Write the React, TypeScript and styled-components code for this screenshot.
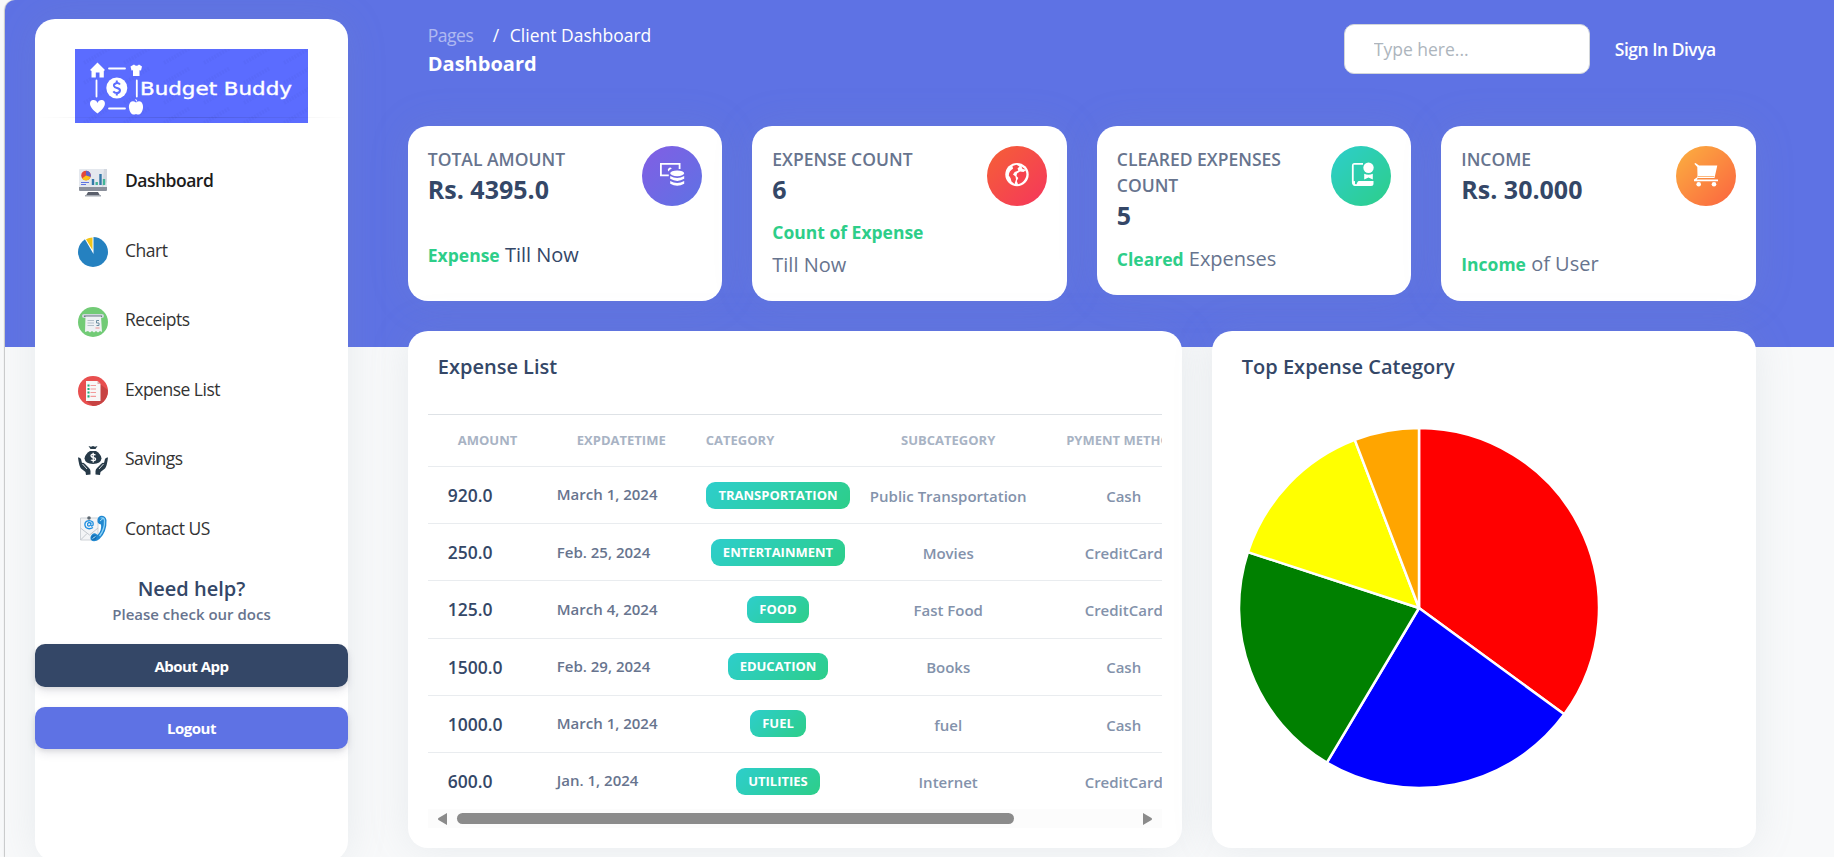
import React from "react";
import styled, { createGlobalStyle, css } from "styled-components";

const navy = "#344767";
const slate = "#67748e";
const primary = "#5e72e4";
const success = "#2dce89";

const GlobalStyle = createGlobalStyle`
  *, *::before, *::after { box-sizing: border-box; }
  html, body { margin: 0; height: 100%; overflow: hidden; }
  body {
    font-family: "Open Sans", "Noto Sans", sans-serif;
    font-size: 20px;
    line-height: 1.5;
    color: ${slate};
    background: #f8f9fa;
  }
  p, h5, h6, ul { margin: 0; padding: 0; }
`;

const Page = styled.div`
  width: 100%;
  height: 857px;
  padding-left: 5px;
  overflow: hidden;
`;

const Canvas = styled.div`
  height: 100%;
  display: flex;
  align-items: flex-start;
  border-top-left-radius: 10px;
  background: linear-gradient(${primary}, ${primary}) top / 100% 347px no-repeat #f8f9fa;
  box-shadow: -1px 0 1px rgba(0, 0, 0, 0.2);
`;

const panel = css`
  background: #fff;
  border-radius: 20px;
  box-shadow: 0 0 40px rgba(136, 152, 170, 0.15);
`;

const Sidebar = styled.aside`
  ${panel}
  flex: none;
  width: 313px;
  height: 842px;
  margin: 19px 0 0 30px;
  padding-top: 30px;
`;

const LogoBox = styled.div`
  position: relative;
  height: 74px;
  padding: 0 40px;
  svg { display: block; }
  &::after {
    content: "";
    position: absolute;
    left: 0;
    right: 0;
    top: 68px;
    height: 1px;
    background: linear-gradient(90deg, transparent, rgba(0, 0, 0, 0.12), transparent);
  }
`;

const NavList = styled.ul`
  list-style: none;
  margin-top: 23px;
`;

const NavItem = styled.li`
  display: flex;
  align-items: center;
  height: 69.5px;
  padding-left: 43px;
  gap: 17px;
  svg { display: block; flex: none; margin-top: 4px; }
`;

const NavLabel = styled.span<{ $active?: boolean }>`
  padding-bottom: ${(p) => (p.$active ? 2 : 1)}px;
  font-size: 17.5px;
  letter-spacing: -0.5px;
  color: ${(p) => (p.$active ? "#1c1c1c" : "#333")};
  font-weight: ${(p) => (p.$active ? 600 : 400)};
`;

const Help = styled.div`
  margin-top: 12px;
  text-align: center;
`;

const HelpTitle = styled.h6`
  font-size: 20px;
  line-height: 28px;
  font-weight: 600;
  color: ${navy};
`;

const HelpText = styled.p`
  font-size: 15px;
  line-height: 22px;
  font-weight: 600;
`;

const SideButton = styled.button<{ $color: string; $h: number }>`
  display: block;
  width: 100%;
  height: ${(p) => p.$h}px;
  margin: 0 0 20px;
  padding: 0;
  border: 0;
  border-radius: 10px;
  background: ${(p) => p.$color};
  color: #fff;
  font: 700 15px "Open Sans", sans-serif;
  letter-spacing: -0.5px;
  box-shadow: 0 5px 8px rgba(50, 50, 93, 0.1), 0 2px 4px rgba(0, 0, 0, 0.08);
`;

const Buttons = styled.div`
  margin-top: 19px;
`;

const Main = styled.main`
  flex: none;
  width: 1348px;
  margin-left: 59.8px;
`;

const Header = styled.header`
  display: flex;
  align-items: flex-start;
  height: 126px;
  padding-left: 20px;
  color: #fff;
`;

const Crumbs = styled.div`
  flex: 1;
  padding-top: 22px;
`;

const CrumbLine = styled.div`
  display: flex;
  font-size: 17.5px;
  line-height: 26px;
`;

const CrumbParent = styled.span`
  width: 65px;
  letter-spacing: -0.5px;
  opacity: 0.5;
`;

const CrumbSlash = styled.span`
  width: 17px;
`;

const PageTitle = styled.h6`
  font-size: 20px;
  line-height: 32px;
  font-weight: 700;
`;

const Search = styled.input`
  width: 246px;
  height: 50px;
  margin-top: 24px;
  padding: 0 29px;
  border: 1px solid #d2d6da;
  border-radius: 10px;
  background: #fff;
  font: 400 17.5px "Open Sans", sans-serif;
  outline: 0;
  &::placeholder { color: #adb5bd; opacity: 1; }
`;

const SignIn = styled.a`
  width: 141px;
  margin: 36px 0 0 25px;
  font-size: 17.5px;
  line-height: 26px;
  font-weight: 600;
  letter-spacing: -0.5px;
`;

const Stats = styled.section`
  display: grid;
  grid-template-columns: repeat(4, 1fr);
  gap: 30px;
  align-items: start;
`;

const StatCard = styled.article<{ $h: number }>`
  ${panel}
  display: flex;
  flex-direction: column;
  height: ${(p) => p.$h}px;
  padding: 20px;
`;

const StatTop = styled.div`
  display: flex;
  justify-content: space-between;
  height: 60px;
`;

const StatLabel = styled.p`
  max-width: 200px;
  font-size: 17.5px;
  line-height: 26px;
  font-weight: 600;
  text-transform: uppercase;
`;

const StatValue = styled.h5`
  font-size: 25px;
  line-height: 34px;
  font-weight: 700;
  color: ${navy};
`;

const StatNote = styled.p<{ $top: number; $dark?: boolean }>`
  margin-top: ${(p) => p.$top}px;
  max-width: 205px;
  line-height: 32.5px;
  font-size: 20px;
  color: ${(p) => (p.$dark ? navy : slate)};
  b {
    font-size: 17.5px;
    font-weight: 700;
    color: ${success};
  }
  span { white-space: nowrap; }
`;

const Disc = styled.div<{ $from: string; $to: string }>`
  flex: none;
  width: 60px;
  height: 60px;
  border-radius: 50%;
  background: linear-gradient(135deg, ${(p) => p.$from}, ${(p) => p.$to});
  svg { display: block; }
`;

const Panels = styled.section`
  display: grid;
  grid-template-columns: 774px 544px;
  justify-content: space-between;
  margin-top: 30px;
`;

const Panel = styled.article`
  ${panel}
  height: 517px;
`;

const PanelTitle = styled.h6`
  padding: 21px 30px 0;
  font-size: 20px;
  line-height: 30px;
  font-weight: 600;
  color: ${navy};
`;

const TableWrap = styled.div`
  width: 734.4px;
  margin: 32px 0 0 20px;
  overflow: hidden;
`;

const Row = styled.div<{ $head?: boolean }>`
  display: grid;
  grid-template-columns: 119px 149px 164.4px 176px 175px;
  align-items: center;
  width: 783.4px;
  height: ${(p) => (p.$head ? 53 : 57.2)}px;
  border-bottom: 1px solid #e9ecef;
  ${(p) => p.$head && css`border-top: 1px solid #dee2e6;`}
  &:last-child { height: 56.2px; border-bottom: 0; }
`;

const HeadCell = styled.span<{ $left?: number }>`
  font-size: 13px;
  font-weight: 700;
  color: #a8b3c4;
  white-space: nowrap;
  ${(p) => (p.$left ? `padding-left: ${p.$left}px;` : "text-align: center;")}
`;

const Amount = styled.span`
  padding-left: 20px;
  font-size: 17.5px;
  font-weight: 600;
  color: ${navy};
`;

const DateCell = styled.span`
  padding: 0 0 1px 10px;
  font-size: 15px;
  font-weight: 600;
`;

const Centered = styled.span`
  padding-top: 2px;
  text-align: center;
  font-size: 15px;
  font-weight: 600;
  color: #8392ab;
  white-space: nowrap;
`;

const Badge = styled.span`
  justify-self: center;
  height: 27px;
  padding: 0 12px;
  border-radius: 9px;
  background: linear-gradient(135deg, #2dcecc, #2dce89);
  color: #fff;
  font-size: 13px;
  line-height: 27px;
  font-weight: 700;
  text-transform: uppercase;
`;

const ScrollBar = styled.div`
  display: flex;
  align-items: center;
  width: 734px;
  height: 19px;
  margin: 0 0 0 20px;
  padding: 0 10px;
  background: #fcfcfc;
`;

const Thumb = styled.div`
  width: 557px;
  height: 11px;
  margin: 0 auto 0 10px;
  border-radius: 6px;
  background: #8b8b8b;
`;

const PieWrap = styled.div`
  padding: 45px 0 0 26.6px;
  svg { display: block; }
`;

function Logo() {
  const marks = [];
  for (let r = 0; r < 4; r++)
    for (let c = 0; c < 6; c++) marks.push([9 + c * 40, 14 + r * 20]);
  return (
    <svg width="233" height="74" viewBox="0 0 233 74">
      <rect width="233" height="74" fill="#5b6cff" />
      <g stroke="#000" strokeOpacity=".025" strokeWidth="4" strokeDasharray="2 1">
        {marks.map(([x, y], i) => (
          <path key={i} d={`M${x} ${y}l26 -15`} />
        ))}
      </g>
      <g fill="#fff">
        <path d="M22.500 13.500L30 21L28.800 22V28.500H24.500V23.500H20.800V28.500H16.500V22L15 21Z" />
        <path d="M59 15.500Q61.500 18 64 15.500L67 17.500L66 21.500L64.500 21.200V27H58V21.200L56.500 21.500L55.500 17.500Z" />
        <circle cx="41.800" cy="39" r="10.500" />
        <path d="M22.500 64.500C12 57 14.500 51 18.500 51Q21.500 51 22.500 54Q23.500 51 26.500 51C30.500 51 33 57 22.500 64.500Z" />
        <path d="M61 53.500C56 50 53.500 55 54 59C55 65 58 66.500 61 65C64 66.500 67 65 68 59C68.500 55 66 50 61 53.500ZM60 50L61.500 53L62 51Z" />
      </g>
      <g stroke="#fff" strokeWidth="1.800" strokeLinecap="round">
        <path d="M34 19.500H50M34 59.500H50M21.500 31.500V47.500M61.800 31.500V47.500" />
      </g>
      <path
        d="M45 35.500Q43.500 33.500 41 34.200Q38.500 35 39 37Q39.500 38.500 42 39Q45 39.700 45 41.500Q44.600 44 41.800 44Q39.500 44 38.300 42.300M41.800 31.500V34M41.800 44V46.500"
        fill="none"
        stroke="#5b6cff"
        strokeWidth="2"
      />
      <text
        x="65"
        y="45.500"
        fill="#fff"
        stroke="#fff"
        strokeWidth=".400"
        fontFamily="DejaVu Sans, sans-serif"
        fontSize="18.500"
        textLength="152"
        lengthAdjust="spacingAndGlyphs"
      >
        Budget Buddy
      </text>
    </svg>
  );
}

const DashboardIcon = () => (
  <svg width="30" height="30" viewBox="0 0 30 30">
    <path d="M10 24H20L22 27.500H8Z" fill="#5a5f6b" />
    <rect x="7" y="27" width="16" height="1.500" fill="#a4a9b2" />
    <rect x="1" y="1" width="28" height="19" rx="1" fill="#e4e8ee" />
    <path d="M29 1V14L24 20L26 1Z" fill="#d3d8e0" />
    <path d="M1 19H29V22Q29 23 28 23H2Q1 23 1 22Z" fill="#8b909b" />
    <circle cx="8" cy="7.500" r="4.800" fill="#e2493b" />
    <path d="M8 7.500V2.700A4.800 4.800 0 0 1 12.600 9Z" fill="#5a63c9" />
    <path d="M8 7.500L12.600 9A4.800 4.800 0 0 1 4 10.500Z" fill="#fcc419" />
    <path d="M3 14.500H11M3 16.500H8" stroke="#5f74e0" />
    <path d="M15 17V11M22.500 17V6" stroke="#3578a8" strokeWidth="2.400" />
    <path d="M18.700 17V14M26 17V11" stroke="#41b496" strokeWidth="2.400" />
  </svg>
);

const ChartIcon = () => (
  <svg width="30" height="30" viewBox="0 0 30 30">
    <circle cx="15" cy="15" r="15" fill="#2581c0" />
    <path d="M15.500 17L6.500 1.500L9 0H15.500Z" fill="#fff" />
    <path d="M14.500 13V.5Q11 .5 8 2.300Z" fill="#f0c419" />
  </svg>
);

const ReceiptsIcon = () => (
  <svg width="30" height="30" viewBox="0 0 30 30">
    <circle cx="15" cy="15" r="15" fill="#72cb76" />
    <rect x="4" y="7" width="22" height="4" rx="2" fill="#cfd6dd" />
    <rect x="6" y="8.500" width="18" height="1.500" fill="#6d7b86" />
    <path d="M7.500 9.500H23L24 25L22 24L20 25.500L18 24L16 25.500L14 24L12 25.500L10 24L7 25Z" fill="#eef1f4" />
    <path d="M9.500 13.500H16M9.500 16H16M9.500 18.500H16" stroke="#b3bfca" />
    <path d="M21 13.500H18.500V16H21V18.500H18.500" stroke="#6c8da0" fill="none" />
    <path d="M17.500 21H21.500" stroke="#ef8f8f" />
  </svg>
);

const ExpenseIcon = () => (
  <svg width="30" height="30" viewBox="0 0 30 30">
    <circle cx="15" cy="15" r="15" fill="#e84f4f" />
    <path d="M22 8L29.800 14A15 15 0 0 1 15 30L8 25Z" fill="#c74343" />
    <path d="M8 5H19.500L22.500 8V25H8Z" fill="#f7f7f7" />
    <path d="M19.500 5V8H22.500Z" fill="#e0a9a9" />
    <path d="M12.500 9.500H18M12.500 13H18M12.500 16.500H18M12.500 20.300H18" stroke="#f29a9a" strokeWidth="1.200" />
    <path d="M9.500 9.500H11.500M9.500 13H11.500M9.500 16.500H11.500M9.500 20.300H11.500" stroke="#1ba977" strokeWidth="2.200" />
  </svg>
);

const SavingsIcon = () => (
  <svg width="30" height="30" viewBox="0 0 30 30">
    <g fill="#273a48">
      <path d="M10.500 0L13 .7L15 0L17 .7L19.500 0L17.500 3H12.500Z" />
      <path d="M12 5H18Q23 8 23.500 12.500Q23 17.500 15 18Q7 17.500 6.500 12.500Q7 8 12 5Z" />
      <path d="M0 11.500Q2 11 3 13L4 17Q5 16 7 18L10.500 21.500Q12.500 23 12.500 25V28.500L8 29L7.500 26L3 22.500Q1 20 0 11.500Z" />
      <path d="M30 11.500Q28 11 27 13L26 17Q25 16 23 18L19.500 21.500Q17.500 23 17.500 25V28.500L22 29L22.500 26L27 22.500Q29 20 30 11.500Z" />
    </g>
    <path d="M4.500 18L9 23M25.500 18L21 23" stroke="#fff" strokeWidth=".8" />
    <path d="M17.500 8.800Q13 7.500 13 9.800Q13.200 11.300 15.500 11.600Q17.800 12 17.500 13.600Q16.500 15.500 12.800 14M15.200 6.800V16.500" fill="none" stroke="#fff" strokeWidth="1.300" />
  </svg>
);

const ContactIcon = () => (
  <svg width="30" height="30" viewBox="0 0 30 30">
    <path d="M2.500 3H20V25H2.500Z" fill="#f3f4f6" stroke="#cfd3d8" />
    <path d="M2.500 13L11.500 20L20 13M2.500 25L9 18.500M20 25L14 18.500" fill="none" stroke="#c3c8ce" />
    <circle cx="11" cy="3" r="1.800" fill="#5d6770" />
    <path d="M15 12.500Q11 15 8 12.500Q5.500 9 8.500 6.300Q12 4.500 14.800 7Q16 11 13.500 11Q12.700 10.500 13 7.500M13 9.300Q12.500 7.300 10.700 7.500Q9 8.500 9.700 10.500Q11.500 12 13 9.300" fill="none" stroke="#1f8fe0" strokeWidth="1.300" />
    <path d="M22 1Q27 0 28.500 5Q29 17 21.500 24Q16 28 13 25Q11.500 22 14 19.500Q17 17 19.500 20Q24 15.500 23 9.500Q19 9 19.500 4.500Q20 1.500 22 1Z" fill="#2088d0" />
    <path d="M22.500 3Q26 2 26.500 5.500Q27 14 21.500 21" fill="none" stroke="#8dd3f7" strokeWidth="1.300" />
    <circle cx="16" cy="22.500" r="2.500" fill="#166fb5" />
    <path d="M14.500 23.500L17.500 21.500M22 6L25 3.500" stroke="#a8e0fb" />
  </svg>
);

const MoneyIcon = () => (
  <svg width="60" height="60" viewBox="0 0 60 60" fill="#fff">
    <path d="M18 17H38.500V23H36.700V18.800H19.800V28.400H26.800V30.200H18Z" />
    <path d="M26.500 25.500A2.200 2.200 0 1 1 29.800 22.600Q27.500 23.500 26.500 25.500Z" />
    <ellipse cx="35.200" cy="27.300" rx="7" ry="2.900" />
    <path d="M28.200 30Q35.200 33.800 42.200 30V32.800Q35.200 37 28.200 32.800Z" />
    <path d="M28.200 35Q35.200 38.800 42.200 35V37.700Q35.200 42 28.200 37.700Z" />
  </svg>
);

const WorldIcon = () => (
  <svg width="60" height="60" viewBox="0 0 60 60">
    <circle cx="30" cy="28.600" r="11.700" fill="#fff" />
    <path d="M25.500 20L29.500 18.800L32.500 20.500L30.500 22.500L31.300 24.500L27.700 26L26 28.500L28.500 30.500L29 33.500L27.500 38L24.500 35.500L23.500 32L21.800 29.500Q22 25 26 22.800Z" fill="#f6484a" />
    <path d="M30 27.500L33 25.500L36.500 26L38.500 24.500Q40.500 29 38 33Q35.500 37.500 31 38.200L29.800 35L31.300 32L29.500 30Z" fill="#f6434f" />
    <path d="M34.500 20.500L38.500 23.500L35.500 23Z" fill="#f6484a" />
  </svg>
);

const DiplomaIcon = () => (
  <svg width="60" height="60" viewBox="0 0 60 60" fill="#fff">
    <path d="M23.500 17H32V18.800H22.700V35.200Q23.300 35 24 35V37.500Q23.500 38.300 24.500 38.300V40H24Q20.900 39.700 20.900 36V20Q20.900 17 23.500 17Z" />
    <path d="M26.500 36L27.500 35H42.500V37.500Q42.500 40 40 40H24V38.300H25.500Z" />
    <circle cx="37.500" cy="21.700" r="5.200" />
    <path d="M33.200 27.800Q37.500 29.500 41.800 27.800V33.500L37.500 31.500L33.200 33.500Z" />
  </svg>
);

const CartIcon = () => (
  <svg width="60" height="60" viewBox="0 0 60 60" fill="#fff">
    <path d="M18.300 17.800L19.500 17L23 19.500H41.300L38.500 32H21.700L20.700 33.400H42V35.200H18V33.500L21.500 31L21.300 21Z" />
    <circle cx="22.700" cy="38.300" r="2.300" />
    <circle cx="38" cy="38.300" r="2.300" />
    <path d="M22 30.500H38.300" stroke="#fc9a45" strokeWidth=".7" />
  </svg>
);

const navItems = [
  { label: "Dashboard", Icon: DashboardIcon },
  { label: "Chart", Icon: ChartIcon },
  { label: "Receipts", Icon: ReceiptsIcon },
  { label: "Expense List", Icon: ExpenseIcon },
  { label: "Savings", Icon: SavingsIcon },
  { label: "Contact US", Icon: ContactIcon },
];

const stats = [
  { label: "Total Amount", value: "Rs. 4395.0", strong: "Expense", rest: "Till Now", from: "#825ee4", to: "#5e72e4", h: 175, top: 33, dark: true, Icon: MoneyIcon },
  { label: "Expense Count", value: "6", strong: "Count of Expense", rest: "Till Now", from: "#f56036", to: "#f5365c", h: 175, top: 10, Icon: WorldIcon },
  { label: "Cleared Expenses Count", value: "5", strong: "Cleared", rest: "Expenses", from: "#2dcecc", to: "#2dce89", h: 169, top: 37, Icon: DiplomaIcon },
  { label: "Income", value: "Rs. 30.000", strong: "Income", rest: "of User", from: "#fbb140", to: "#fb6340", h: 175, top: 42, Icon: CartIcon },
];

const rows = [
  ["920.0", "March 1, 2024", "Transportation", "Public Transportation", "Cash"],
  ["250.0", "Feb. 25, 2024", "Entertainment", "Movies", "CreditCard"],
  ["125.0", "March 4, 2024", "Food", "Fast Food", "CreditCard"],
  ["1500.0", "Feb. 29, 2024", "Education", "Books", "Cash"],
  ["1000.0", "March 1, 2024", "Fuel", "fuel", "Cash"],
  ["600.0", "Jan. 1, 2024", "Utilities", "Internet", "CreditCard"],
];

const slices = [
  { color: "red", from: 0, to: 126.2 },
  { color: "blue", from: 126.2, to: 210.8 },
  { color: "green", from: 210.8, to: 288.1 },
  { color: "yellow", from: 288.1, to: 339.1 },
  { color: "orange", from: 339.1, to: 360 },
];

function Pie() {
  const c = 181;
  const r = 180;
  const point = (deg: number) => {
    const a = ((deg - 90) * Math.PI) / 180;
    return `${c + r * Math.cos(a)} ${c + r * Math.sin(a)}`;
  };
  return (
    <svg width="362" height="362" viewBox="0 0 362 362">
      {slices.map((s) => (
        <path
          key={s.color}
          d={`M${c} ${c}L${point(s.from)}A${r} ${r} 0 0 1 ${point(s.to)}Z`}
          fill={s.color}
          stroke="#fff"
          strokeWidth="2.500"
          strokeLinejoin="bevel"
        />
      ))}
    </svg>
  );
}

export default function App() {
  return (
    <>
      <GlobalStyle />
      <Page>
        <Canvas>
          <Sidebar>
            <LogoBox><Logo /></LogoBox>
            <NavList>
              {navItems.map(({ label, Icon }, i) => (
                <NavItem key={label}>
                  <Icon />
                  <NavLabel $active={i === 0}>{label}</NavLabel>
                </NavItem>
              ))}
            </NavList>
            <Help>
              <HelpTitle>Need help?</HelpTitle>
              <HelpText>Please check our docs</HelpText>
            </Help>
            <Buttons>
              <SideButton $color={navy} $h={43}>About App</SideButton>
              <SideButton $color={primary} $h={42}>Logout</SideButton>
            </Buttons>
          </Sidebar>
          <Main>
            <Header>
              <Crumbs>
                <CrumbLine>
                  <CrumbParent>Pages</CrumbParent>
                  <CrumbSlash>/</CrumbSlash>
                  <span>Client Dashboard</span>
                </CrumbLine>
                <PageTitle>Dashboard</PageTitle>
              </Crumbs>
              <Search placeholder="Type here..." />
              <SignIn>Sign In Divya</SignIn>
            </Header>
            <Stats>
              {stats.map(({ Icon, ...s }) => (
                <StatCard key={s.label} $h={s.h}>
                  <StatTop>
                    <div>
                      <StatLabel>{s.label}</StatLabel>
                      <StatValue>{s.value}</StatValue>
                    </div>
                    <Disc $from={s.from} $to={s.to}><Icon /></Disc>
                  </StatTop>
                  <StatNote $top={s.top} $dark={s.dark}>
                    <b>{s.strong}</b> <span>{s.rest}</span>
                  </StatNote>
                </StatCard>
              ))}
            </Stats>
            <Panels>
              <Panel>
                <PanelTitle>Expense List</PanelTitle>
                <TableWrap>
                  <Row $head>
                    <HeadCell $left={30}>AMOUNT</HeadCell>
                    <HeadCell $left={30}>EXPDATETIME</HeadCell>
                    <HeadCell $left={10}>CATEGORY</HeadCell>
                    <HeadCell>SUBCATEGORY</HeadCell>
                    <HeadCell $left={30}>PYMENT METHOD</HeadCell>
                  </Row>
                  {rows.map(([amount, date, category, sub, method]) => (
                    <Row key={amount}>
                      <Amount>{amount}</Amount>
                      <DateCell>{date}</DateCell>
                      <Badge>{category}</Badge>
                      <Centered>{sub}</Centered>
                      <Centered>{method}</Centered>
                    </Row>
                  ))}
                </TableWrap>
                <ScrollBar>
                  <svg width="9" height="12" viewBox="0 0 9 12"><path d="M9 0V12L.5 7Q-.5 6 .5 5Z" fill="#8b8b8b" /></svg>
                  <Thumb />
                  <svg width="9" height="12" viewBox="0 0 9 12"><path d="M0 0V12L8.500 7Q9.500 6 8.500 5Z" fill="#8b8b8b" /></svg>
                </ScrollBar>
              </Panel>
              <Panel>
                <PanelTitle>Top Expense Category</PanelTitle>
                <PieWrap><Pie /></PieWrap>
              </Panel>
            </Panels>
          </Main>
        </Canvas>
      </Page>
    </>
  );
}
